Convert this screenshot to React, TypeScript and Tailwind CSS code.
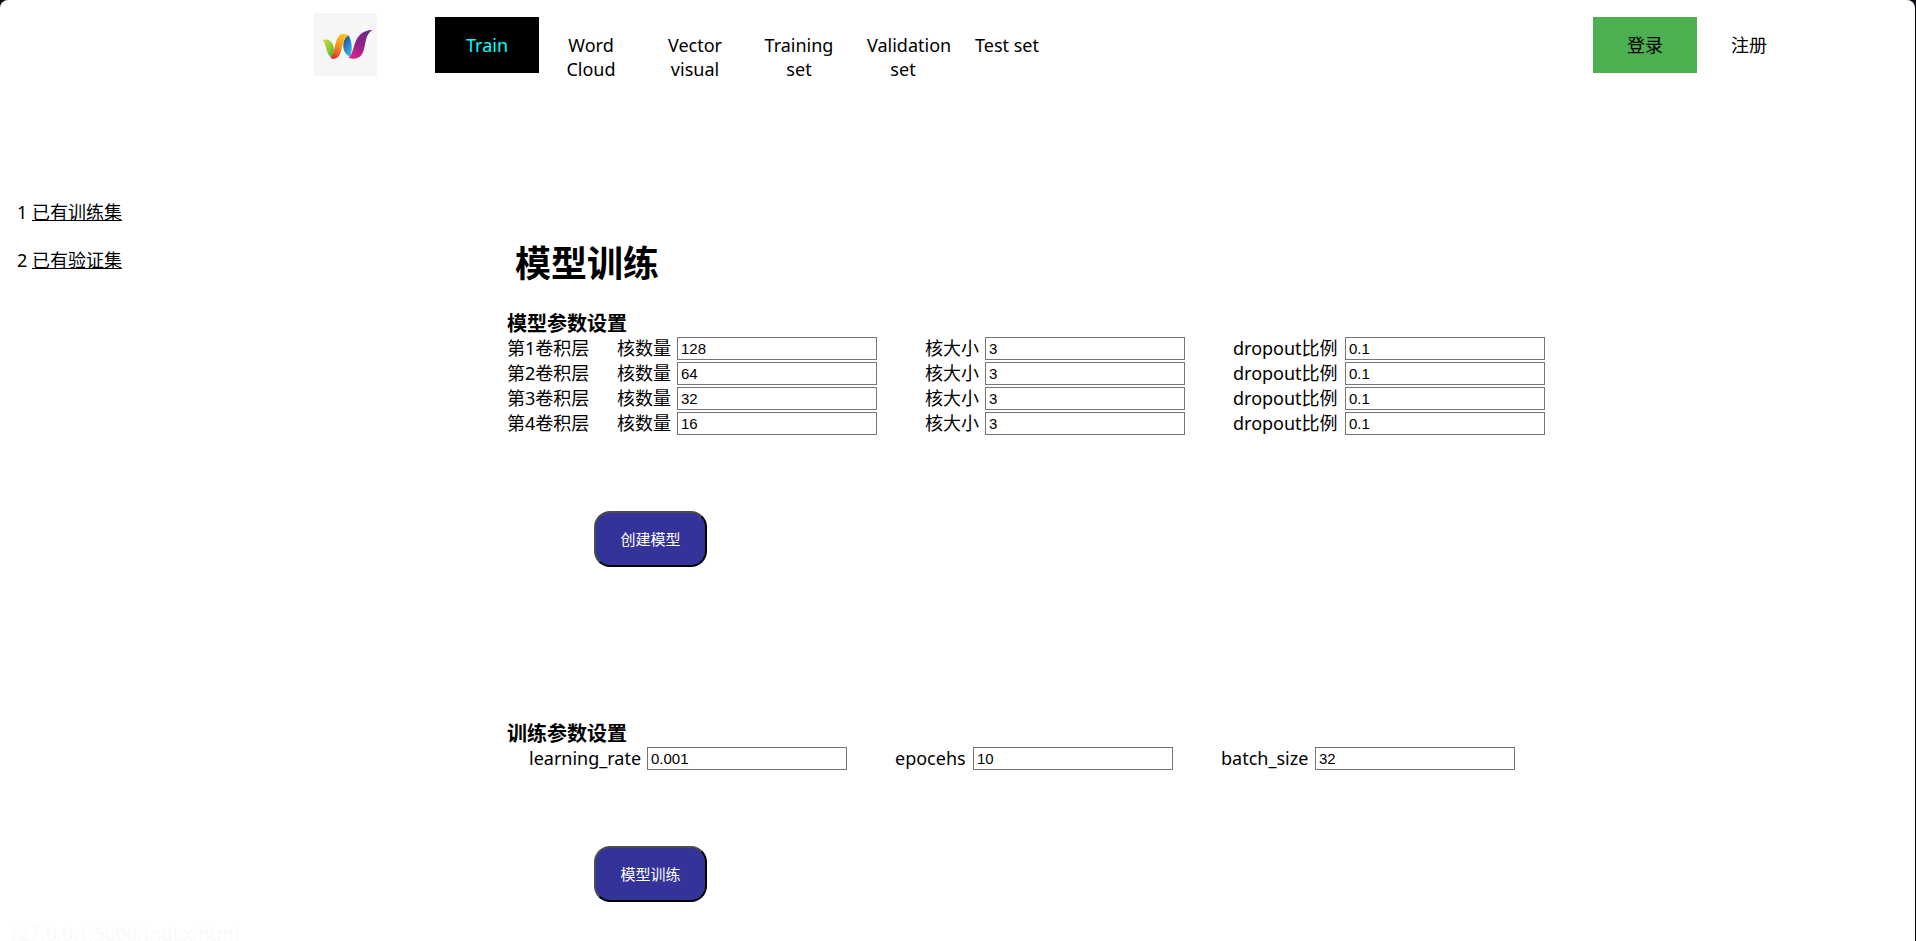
import React from 'react';

const navItems = ['Word Cloud', 'Vector visual', 'Training set', 'Validation set', 'Test set'];

const layers = [
  { id: 1, kernels: '128', size: '3', dropout: '0.1' },
  { id: 2, kernels: '64', size: '3', dropout: '0.1' },
  { id: 3, kernels: '32', size: '3', dropout: '0.1' },
  { id: 4, kernels: '16', size: '3', dropout: '0.1' },
];

function Logo() {
  return (
    <svg viewBox="0 0 63 63" className="h-[63px] w-[63px]" role="img" aria-label="W">
      <defs>
        <linearGradient id="green" x1="0" y1="0" x2="1" y2="1">
          <stop offset="0" stopColor="#d3de2e" />
          <stop offset="0.6" stopColor="#8cc434" />
          <stop offset="1" stopColor="#3f9b3a" />
        </linearGradient>
        <linearGradient id="orange" x1="0.7" y1="0" x2="0.3" y2="1">
          <stop offset="0" stopColor="#fcc419" />
          <stop offset="0.5" stopColor="#f7931e" />
          <stop offset="1" stopColor="#e5352b" />
        </linearGradient>
        <linearGradient id="blue" x1="0" y1="0" x2="0.6" y2="1">
          <stop offset="0" stopColor="#1b3f7c" />
          <stop offset="0.5" stopColor="#2a7cc0" />
          <stop offset="1" stopColor="#35b0e0" />
        </linearGradient>
        <linearGradient id="purple" x1="0.8" y1="0" x2="0.2" y2="1">
          <stop offset="0" stopColor="#6b2c8c" />
          <stop offset="0.5" stopColor="#8a2489" />
          <stop offset="1" stopColor="#e0218a" />
        </linearGradient>
      </defs>
      <rect width="63" height="63" fill="#f6f6f6" />
      <path d="M8.5 27 C14 25.5 18 28 19.5 33 C20.5 37 19.5 41 18 45 C11 41 13 31 8.5 27Z" fill="url(#green)" />
      <path d="M34.5 22.5 C38 27 38.5 36 36.5 43.5 C30 42 28 34 30 28 C31 25 32.5 23.5 34.5 22.5Z" fill="url(#blue)" />
      <path
        d="M16.5 44.5 C22.5 41 19 21 30 21 C32 21 33.5 21.5 34.5 22 C26 26 30 45 20 46 C18.5 46 17.5 45.5 16.5 44.5Z"
        fill="url(#orange)"
      />
      <path
        d="M34.5 44.5 C42 41 37 17.5 58.5 17 C49 23 53 36 47 42.5 C43.5 46.5 38 46.5 34.5 44.5Z"
        fill="url(#purple)"
      />
    </svg>
  );
}

type FieldProps = { id: string; label: string; value: string; labelClass: string };

function Field({ id, label, value, labelClass }: FieldProps) {
  return (
    <div className="flex items-center">
      <label htmlFor={id} className={`shrink-0 pb-0.5 whitespace-nowrap ${labelClass}`}>
        {label}
      </label>
      <input
        id={id}
        type="text"
        defaultValue={value}
        className="h-[23px] w-[200px] border border-[#767676] bg-white px-[3px] font-['Liberation_Sans',sans-serif] text-[15px] leading-5 text-black"
      />
    </div>
  );
}

function ActionButton({ children }: { children: React.ReactNode }) {
  return (
    <button
      type="button"
      className="ml-[87px] h-14 w-[113px] rounded-2xl border-2 border-t-[#4c4c4c] border-r-black border-b-black border-l-[#4c4c4c] bg-[#333399] text-[15px] text-white"
    >
      {children}
    </button>
  );
}

export default function App() {
  return (
    <div className="min-h-screen bg-[#05070f] pr-px font-['Noto_Sans','Noto_Sans_CJK_SC',sans-serif] text-lg leading-6 text-black">
      <div className="relative min-h-screen overflow-hidden rounded-t-lg bg-white">
        <header className="flex items-start pr-[114px] pl-[314px]">
          <a href="#home" className="mt-[13px] mr-[58px] block">
            <Logo />
          </a>
          <nav className="mt-[17px] flex h-14">
            <a href="#train" className="block h-14 w-[104px] bg-black px-4 py-4 text-center text-[#00ffff]">
              Train
            </a>
            {navItems.map((item) => (
              <a key={item} href="#nav" className="block h-14 w-[104px] px-4 py-4 text-center">
                {item}
              </a>
            ))}
          </nav>
          <div className="mt-[17px] ml-auto flex">
            <a href="#login" className="block h-14 w-[104px] bg-[#4caf50] py-4 text-center">
              登录
            </a>
            <a href="#register" className="block h-14 w-[104px] py-4 text-center">
              注册
            </a>
          </div>
        </header>

        <div className="flex">
          <aside className="w-[507px] shrink-0 pt-[124px] pl-[17px]">
            <ul className="flex flex-col gap-6">
              <li>
                1 <a href="#training" className="underline">已有训练集</a>
              </li>
              <li>
                2 <a href="#validation" className="underline">已有验证集</a>
              </li>
            </ul>
          </aside>

          <main className="pt-[164px]">
            <h1 className="pl-2 text-4xl leading-12 font-bold">模型训练</h1>

            <section className="mt-6">
              <h2 className="text-xl leading-6 font-bold">模型参数设置</h2>
              {layers.map((layer) => (
                <div key={layer.id} className="flex h-[25px] items-center">
                  <span className="w-[110px] pb-0.5">第{layer.id}卷积层</span>
                  <div className="flex gap-12">
                    <Field id={`kernels-${layer.id}`} label="核数量" value={layer.kernels} labelClass="w-[60px]" />
                    <Field id={`size-${layer.id}`} label="核大小" value={layer.size} labelClass="w-[60px]" />
                    <Field id={`dropout-${layer.id}`} label="dropout比例" value={layer.dropout} labelClass="w-28" />
                  </div>
                </div>
              ))}
              <div className="mt-[75px]">
                <ActionButton>创建模型</ActionButton>
              </div>
            </section>

            <section className="mt-[155px]">
              <h2 className="text-xl leading-6 font-bold">训练参数设置</h2>
              <div className="flex h-[25px] items-center gap-12 pl-[22px]">
                <Field id="learning-rate" label="learning_rate" value="0.001" labelClass="w-[118px]" />
                <Field id="epochs" label="epocehs" value="10" labelClass="w-[78px]" />
                <Field id="batch-size" label="batch_size" value="32" labelClass="w-[94px]" />
              </div>
              <div className="mt-[75px]">
                <ActionButton>模型训练</ActionButton>
              </div>
            </section>
          </main>
        </div>

        <div className="absolute bottom-0 left-2 h-[17px] overflow-hidden text-[19px] leading-5 text-[#fafafa]">
          127.0.0.1:5000/index.html
        </div>
      </div>
    </div>
  );
}
